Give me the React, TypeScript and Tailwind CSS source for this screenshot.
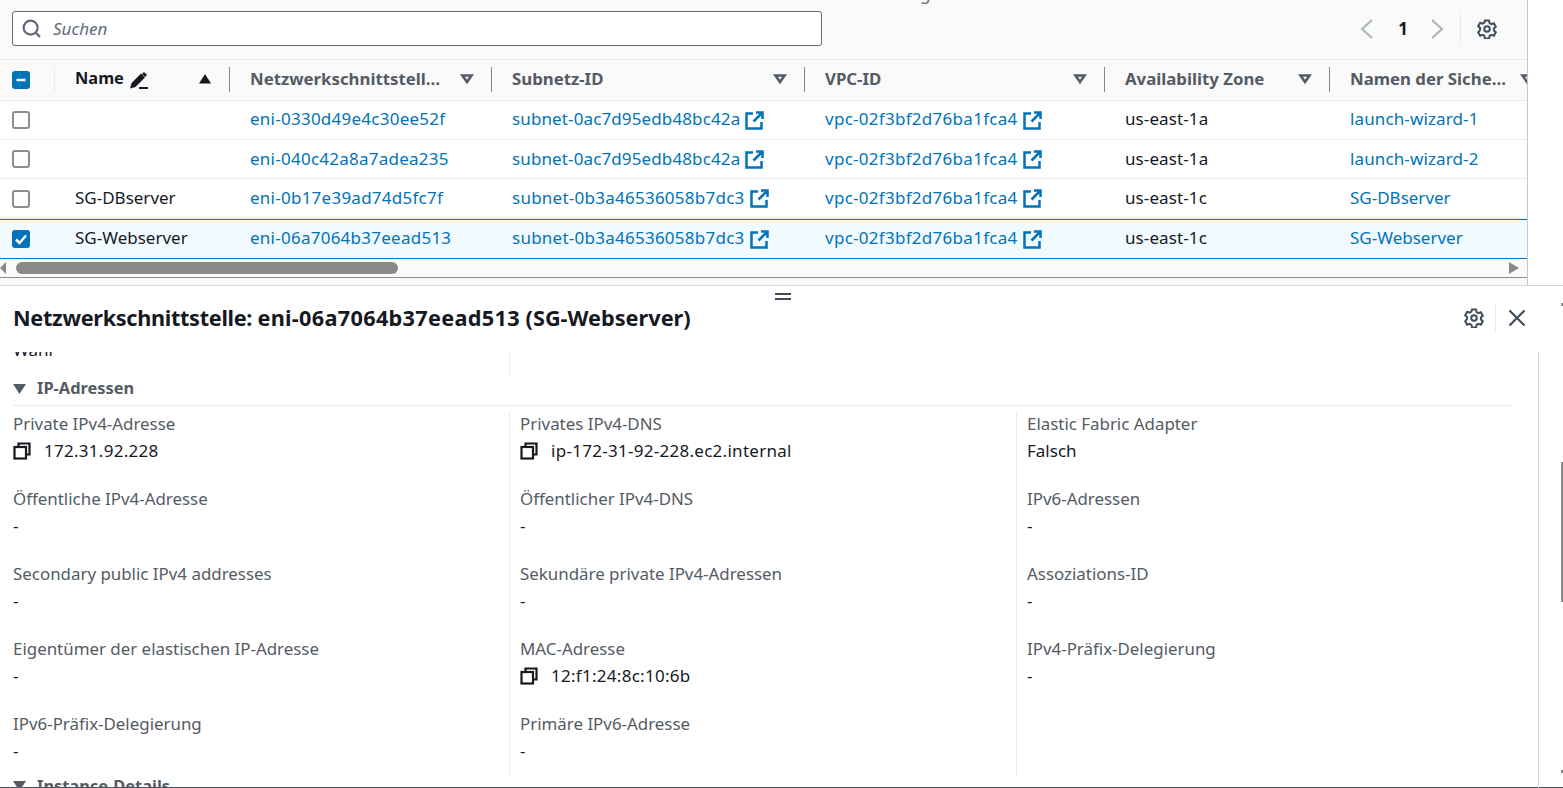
import { Search } from "lucide-react";

const font = { fontFamily: '"Noto Sans", sans-serif' };

const rows = [
    { name: "", eni: "eni-0330d49e4c30ee52f", subnet: "subnet-0ac7d95edb48bc42a", az: "us-east-1a", sg: "launch-wizard-1", h: "h-[39px]", raised: true },
    { name: "", eni: "eni-040c42a8a7adea235", subnet: "subnet-0ac7d95edb48bc42a", az: "us-east-1a", sg: "launch-wizard-2", h: "h-[39px]" },
    { name: "SG-DBserver", eni: "eni-0b17e39ad74d5fc7f", subnet: "subnet-0b3a46536058b7dc3", az: "us-east-1c", sg: "SG-DBserver", h: "h-[40px]" },
];

const columns = "grid grid-cols-[55px_175px_262px_313px_300px_225px_222px]";

const details = [
    [
        { label: "Private IPv4-Adresse", value: "172.31.92.228", copy: true },
        { label: "Öffentliche IPv4-Adresse", value: "-" },
        { label: "Secondary public IPv4 addresses", value: "-" },
        { label: "Eigentümer der elastischen IP-Adresse", value: "-" },
        { label: "IPv6-Präfix-Delegierung", value: "-" },
    ],
    [
        { label: "Privates IPv4-DNS", value: "ip-172-31-92-228.ec2.internal", copy: true },
        { label: "Öffentlicher IPv4-DNS", value: "-" },
        { label: "Sekundäre private IPv4-Adressen", value: "-" },
        { label: "MAC-Adresse", value: "12:f1:24:8c:10:6b", copy: true },
        { label: "Primäre IPv6-Adresse", value: "-" },
    ],
    [
        { label: "Elastic Fabric Adapter", value: "Falsch" },
        { label: "IPv6-Adressen", value: "-" },
        { label: "Assoziations-ID", value: "-" },
        { label: "IPv4-Präfix-Delegierung", value: "-" },
    ],
];

function ExternalIcon() {
    return (
        <svg width="19" height="19" viewBox="0 0 19 19" fill="none" stroke="#0073bb" strokeWidth="2.500" className="shrink-0">
            <path d="M8 2.500H1.500v15h15V11" />
            <path d="M11 1.500h6.500V8M17.500 1.500L8.500 10.500" />
        </svg>
    );
}

function CopyIcon() {
    return (
        <svg width="18" height="18" viewBox="0 0 18 18" fill="none" stroke="#16191f" strokeWidth="2.200" className="shrink-0">
            <path d="M5.500 4V1.500h11v11H14" />
            <rect x="1.500" y="5" width="11.500" height="11.500" />
        </svg>
    );
}

function PencilIcon() {
    return (
        <svg width="18" height="18" viewBox="0 0 18 18" fill="none" stroke="#16191f" strokeWidth="2" className="shrink-0">
            <path d="M1.500 16l1-3.500L11 4l2.500 2.500L5 15z" fill="#16191f" />
            <path d="M14 1.500l2.500 2.500-1.500 1.500L12.500 3z" fill="#16191f" strokeWidth="1" />
            <path d="M9 17h9" />
        </svg>
    );
}

function GearIcon() {
    return (
        <svg width="20" height="20" viewBox="0 0 20 20" fill="none" stroke="#414d5c" strokeWidth="2" className="shrink-0">
            <path d="M8 1.500h4l.6 2.600 1.700 1 2.500-.8 2 3.400-1.900 1.800v2l1.900 1.800-2 3.400-2.500-.8-1.700 1-.6 2.600H8l-.6-2.600-1.700-1-2.500.8-2-3.400L3.100 11V9L1.200 7.200l2-3.400 2.500.8 1.700-1z" />
            <circle cx="10" cy="10" r="2.800" />
        </svg>
    );
}

function Chevron({ right }: { right?: boolean }) {
    return (
        <svg width="14" height="20" viewBox="0 0 14 20" fill="none" stroke="#aab7b8" strokeWidth="2.200" className="shrink-0">
            <path d={right ? "M2 1l10 9-10 9" : "M12 1L2 10l10 9"} />
        </svg>
    );
}

function CloseIcon() {
    return (
        <svg width="18" height="18" viewBox="0 0 18 18" fill="none" stroke="#414d5c" strokeWidth="2.200" className="shrink-0">
            <path d="M1.500 1.500l15 15M16.500 1.500l-15 15" />
        </svg>
    );
}

function Caret({ up }: { up?: boolean }) {
    if (up) {
        return (
            <svg width="14" height="12" viewBox="0 0 14 12" className="shrink-0">
                <path d="M7 1l6 9.500H1z" fill="#16191f" />
            </svg>
        );
    }
    return (
        <svg width="14" height="12" viewBox="0 0 14 12" fill="none" stroke="#545b64" strokeWidth="2.600" className="shrink-0">
            <path d="M2.500 2.500h9L7 9z" />
        </svg>
    );
}

function Checkbox({ state }: { state: "none" | "checked" | "mixed" }) {
    if (state === "none") {
        return <div className="h-[18px] w-[18px] rounded-[3px] border-2 border-[#8c8c94] bg-white" />;
    }
    return (
        <div className="flex h-[18px] w-[18px] items-center justify-center rounded-[3px] bg-[#0073bb]">
            <svg width="14" height="14" viewBox="0 0 14 14" fill="none" stroke="white" strokeWidth="2.500">
                {state === "checked" ? <path d="M2 7.500l3.500 3.500L12 3.500" /> : <path d="M2.500 7h9" />}
            </svg>
        </div>
    );
}

function HeaderCell({ title, width }: { title: string; width: string }) {
    return (
        <div className="relative flex h-full items-center pl-5">
            <span className={`-mt-[2px] truncate text-[16.800px] font-bold text-[#545b64] ${width}`}>{title}</span>
            <div className="absolute right-[18px] top-[13px]">
                <Caret />
            </div>
            <div className="absolute right-0 top-[7px] h-[25px] w-px bg-[#7d8998]" />
        </div>
    );
}

function Row({ name, eni, subnet, az, sg, h, selected, raised }: { name: string; eni: string; subnet: string; az: string; sg: string; h: string; selected?: boolean; raised?: boolean }) {
    const border = selected ? "border-y border-[#0073bb] bg-[#f1faff]" : "border-b border-[#e9ebed] bg-white";
    const shift = raised ? "-mt-[3px]" : "-mt-px";
    return (
        <div className={`${columns} ${h} ${border} items-center text-[#16191f]`}>
            <div className="flex pl-3">
                <Checkbox state={selected ? "checked" : "none"} />
            </div>
            <div className={`pl-5 ${shift}`}>{name}</div>
            <div className={`pl-5 ${shift} tracking-[0.25px] text-[#0073bb]`}>{eni}</div>
            <div className="flex items-center gap-[5px] pl-5 text-[#0073bb]">
                <span className={`${shift} ${subnet.includes("0ac") ? "tracking-[0.12px]" : "tracking-[0.25px]"}`}>{subnet}</span>
                <ExternalIcon />
            </div>
            <div className="flex items-center gap-[5px] pl-5 text-[#0073bb]">
                <span className={`${shift} tracking-[0.28px]`}>vpc-02f3bf2d76ba1fca4</span>
                <ExternalIcon />
            </div>
            <div className={`pl-5 ${shift} tracking-[0.1px]`}>{az}</div>
            <div className={`pl-5 ${shift} ${sg.startsWith("launch") ? "tracking-[0.12px]" : ""} text-[#0073bb]`}>{sg}</div>
        </div>
    );
}

function DetailColumn({ items, border }: { items: { label: string; value: string; copy?: boolean }[]; border?: boolean }) {
    return (
        <div className={`w-[497px] ${border ? "border-r border-[#e9ebed]" : ""} flex flex-col gap-[27px]`}>
            {items.map((item) => (
                <div key={item.label} className="h-[48px]">
                    <div className="h-[24px] text-[16.900px] leading-[24px] text-[#545b64]">{item.label}</div>
                    <div className="mt-[3px] flex h-[24px] items-center gap-[13px] leading-[24px] text-[#16191f]">
                        {item.copy && <CopyIcon />}
                        <span className={item.copy ? "tracking-[0.28px]" : ""}>{item.value}</span>
                    </div>
                </div>
            ))}
        </div>
    );
}

export default function App() {
    return (
        <div className="h-[788px] w-[1563px] overflow-hidden bg-white text-[17px]" style={font}>
            <div className="h-[278px] w-[1528px] overflow-hidden border-r border-[#c6c6cd]">
                <div className="relative flex h-[60px] items-center justify-between overflow-hidden border-b border-[#e9ebed] bg-[#fafafa] pb-[2px] pl-3 pr-[30px]">
                    <span className="absolute -top-[19px] left-[920px] text-[#5f6b7a]">g</span>
                    <div className="flex h-[35px] w-[810px] items-center gap-[11px] rounded-[3px] border border-[#5f6b7a] bg-white pl-[8px]">
                        <Search size={21} strokeWidth={2.500} color="#5f6b7a" />
                        <span className="italic text-[#5f6b7a]">Suchen</span>
                    </div>
                    <div className="flex items-center">
                        <Chevron />
                        <span className="ml-[24px] mr-[22px] font-bold text-[#16191f]">1</span>
                        <Chevron right />
                        <div className="ml-[16px] mr-[16px] h-[32px] w-px bg-[#e9ebed]" />
                        <GearIcon />
                    </div>
                </div>
                <div className="w-[1527px] overflow-hidden">
                    <div className="w-[1552px]">
                        <div className={`${columns} h-[41px] items-center border-b border-[#e9ebed] bg-[#fafafa]`}>
                            <div className="relative flex h-full items-center pl-3">
                                <Checkbox state="mixed" />
                                <div className="absolute right-0 top-[7px] h-[25px] w-px bg-[#e9ebed]" />
                            </div>
                            <div className="relative flex h-full items-center pl-5">
                                <span className="-mt-[3px] text-[16.400px] font-bold text-[#16191f]">Name</span>
                                <span className="ml-[6px]">
                                    <PencilIcon />
                                </span>
                                <div className="absolute right-[18px] top-[13px]">
                                    <Caret up />
                                </div>
                                <div className="absolute right-0 top-[7px] h-[25px] w-px bg-[#7d8998]" />
                            </div>
                            <HeaderCell title="Netzwerkschnittstellen-ID" width="w-[193px]" />
                            <HeaderCell title="Subnetz-ID" width="w-[200px]" />
                            <HeaderCell title="VPC-ID" width="w-[200px]" />
                            <HeaderCell title="Availability Zone" width="w-[170px]" />
                            <HeaderCell title="Namen der Sicherheitsgruppen" width="w-[158px]" />
                        </div>
                        {rows.map((row) => (
                            <Row key={row.eni} {...row} />
                        ))}
                        <Row name="SG-Webserver" eni="eni-06a7064b37eead513" subnet="subnet-0b3a46536058b7dc3" az="us-east-1c" sg="SG-Webserver" h="h-[40px]" selected raised />
                    </div>
                </div>
                <div className="flex h-[19px] items-center justify-between border-b border-[#8c8c94] bg-[#fafafa] pr-[8px]">
                    <div className="flex items-center">
                        <svg width="7" height="12" viewBox="0 0 7 12">
                            <path d="M6 0v12L0 6z" fill="#8a8a8a" />
                        </svg>
                        <div className="ml-[9px] h-[12px] w-[382px] rounded-full bg-[#8a8a8a]" />
                    </div>
                    <svg width="10" height="12" viewBox="0 0 10 12">
                        <path d="M0 0v12l10-6z" fill="#8a8a8a" />
                    </svg>
                </div>
            </div>
            <div className="h-[7px] w-[1528px] border-r border-[#c6c6cd] bg-[#fafafa]" />
            <div className="relative h-[503px] border-y border-t-[#d5dbdb] border-b-[#414d5c]">
                <div className="absolute left-[775px] top-[7px] flex flex-col gap-[3px]">
                    <div className="h-[2px] w-[16px] bg-[#414d5c]" />
                    <div className="h-[2px] w-[16px] bg-[#414d5c]" />
                </div>
                <div className="flex h-[66px] items-center justify-between pb-[2px] pl-[13px] pr-[37px]">
                    <h2 className="text-[21.700px] font-bold text-[#16191f]">
                        <span className="tracking-[-0.32px]">Netzwerkschnittstelle: </span>
                        <span className="tracking-[0.3px]">eni-06a7064b37eead513</span> (SG-Webserver)
                    </h2>
                    <div className="flex items-center">
                        <GearIcon />
                        <div className="ml-[11px] mr-[12px] h-[30px] w-px bg-[#e9ebed]" />
                        <CloseIcon />
                    </div>
                </div>
                <div className="flex h-[436px] w-[1563px]">
                    <div className="h-full w-[1539px] overflow-hidden border-r border-[#d5dbdb] pl-[13px]">
                        <div className="-mt-[14px] flex h-[38px] w-[497px] items-start border-r border-[#e9ebed] leading-[24px] text-[#16191f]">
                            <span className="h-[24px]">Wahr</span>
                        </div>
                        <div className="flex h-[30px] w-[1499px] items-center gap-[11px] border-b border-[#e9ebed] pb-[4px] text-[16.400px] font-bold text-[#545b64]">
                            <svg width="13" height="10" viewBox="0 0 13 10">
                                <path d="M0 0h13L6.500 10z" fill="#545b64" />
                            </svg>
                            IP-Adressen
                        </div>
                        <div className="flex h-[370px] gap-[10px] pt-[6px]">
                            <DetailColumn items={details[0]} border />
                            <DetailColumn items={details[1]} border />
                            <DetailColumn items={details[2]} />
                        </div>
                        <div className="-mt-[2px] flex items-center gap-[11px] text-[16.400px] font-bold text-[#545b64]">
                            <svg width="13" height="10" viewBox="0 0 13 10">
                                <path d="M0 0h13L6.500 10z" fill="#545b64" />
                            </svg>
                            Instance-Details
                        </div>
                    </div>
                    <div className="relative flex-1">
                        <div className="absolute right-0 top-[110px] h-[140px] w-[2px] bg-[#8a8a8a]" />
                        <div className="absolute right-0 -top-[49px] h-[3px] w-[2px] bg-[#8a8a8a]" />
                        <div className="absolute right-0 top-[418px] h-[3px] w-[2px] bg-[#8a8a8a]" />
                    </div>
                </div>
            </div>
        </div>
    );
}
